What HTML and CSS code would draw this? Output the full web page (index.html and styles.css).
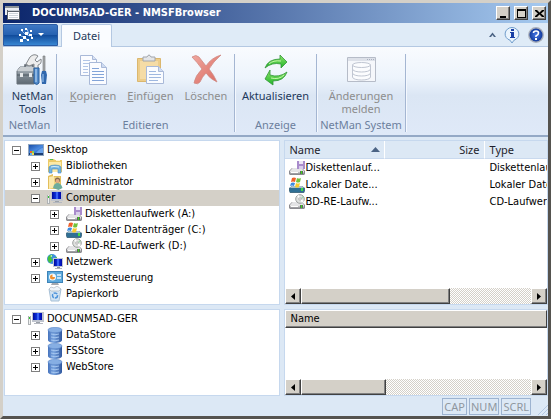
FILE: index.html
```html
<!DOCTYPE html>
<html lang="de">
<head>
<meta charset="utf-8">
<meta name="viewport" content="width=device-width, initial-scale=1">
<title>DOCUNM5AD-GER - NMSFBrowser</title>
<link rel="stylesheet" href="styles.css">
</head>
<body>
<svg class="defs" aria-hidden="true">
  <defs>
    <linearGradient id="g-disk" x1="0" y1="0" x2="0" y2="1"><stop offset="0" stop-color="#f4f4f4"/><stop offset="1" stop-color="#8d8d92"/></linearGradient>
    <linearGradient id="g-db" x1="0" y1="0" x2="1" y2="0"><stop offset="0" stop-color="#4673bd"/><stop offset=".4" stop-color="#7ba6e0"/><stop offset="1" stop-color="#2e569e"/></linearGradient>
    <linearGradient id="g-screen" x1="0" y1="0" x2="1" y2="0"><stop offset="0" stop-color="#000a9c"/><stop offset=".5" stop-color="#1038e8"/><stop offset="1" stop-color="#0008a8"/></linearGradient>
    <linearGradient id="g-desk" x1="0" y1="0" x2="1" y2="1"><stop offset="0" stop-color="#1b4fa8"/><stop offset=".55" stop-color="#4a8ae0"/><stop offset="1" stop-color="#1c55b4"/></linearGradient>
    <linearGradient id="g-green" x1="0" y1="0" x2="0" y2="1"><stop offset="0" stop-color="#8fe66a"/><stop offset="1" stop-color="#1fb32a"/></linearGradient>
    <linearGradient id="g-box" x1="0" y1="0" x2="0" y2="1"><stop offset="0" stop-color="#b9c0c6"/><stop offset=".5" stop-color="#7f8a93"/><stop offset="1" stop-color="#5e6972"/></linearGradient>
    <linearGradient id="g-red" x1="0" y1="0" x2="1" y2="1"><stop offset="0" stop-color="#f0a8a0"/><stop offset="1" stop-color="#d9695f"/></linearGradient>
    <radialGradient id="g-help"><stop offset="0" stop-color="#4a7be8"/><stop offset="1" stop-color="#123a9c"/></radialGradient>
  </defs>
  <symbol id="i-drive" viewBox="0 0 16 16">
    <path d="M3 8h10l3 3v3l-1 1H1l-1-1v-3z" fill="#8b8b90"/>
    <path d="M3.500 8h9l2.500 3H1z" fill="#e4e4e6"/><path d="M1 11h14v3H1z" fill="url(#g-disk)"/>
    <path d="M2 12.500h7" stroke="#fff"/><path d="M11 11h3v3h-3z" fill="#5d6a5c"/><path d="M12 11h1v3h-1z" fill="#3ed31c"/>
  </symbol>
  <symbol id="i-floppy" viewBox="0 0 16 16">
    <use href="#i-drive"/><path d="M8 1h8v8H8z" fill="#a98ccc"/><path d="M10 1h4v3h-4z" fill="#ece6f6"/><path d="M10 6h4v3h-4z" fill="#d8cdea"/>
  </symbol>
  <symbol id="i-hdd" viewBox="0 0 16 16">
    <path d="M3 9h10l3 2v3l-1 2H1l-1-2v-3z" fill="#466f86"/><path d="M3 9h10l2 2H1z" fill="#a8bfcb"/><path d="M1 11h14v4H1z" fill="#2f6f94"/><path d="M12 11h2v3h-2z" fill="#42dc40"/>
    <path d="M3 1q2-1 4 0L6 5Q4 4 2 5z" fill="#f0612a"/><path d="M8 1q2 1 4 0l-1 4q-2 1-4 0z" fill="#72c23a"/><path d="M2 6q2-1 4 0L5 9Q3 8 1 9z" fill="#3e8be0"/><path d="M7 6q2 1 4 0l-1 4q-2 1-4 0z" fill="#f8ca2e"/>
  </symbol>
  <symbol id="i-cd" viewBox="0 0 16 16">
    <use href="#i-drive"/><circle cx="11" cy="5" r="4.300" fill="#dfe1df" stroke="#9da09f"/><path d="M11 5l-3-3 2-1zM11 5l4 2-2 2z" fill="#fff"/><path d="M11 5l3-3 1 2z" fill="#a6d4b0"/><circle cx="11" cy="5" r="1.200" fill="#fff" stroke="#888" stroke-width=".6"/>
  </symbol>
  <symbol id="i-desktop" viewBox="0 0 16 16">
    <path d="M0 2h16v12H0z" fill="#8fa5bf"/><path d="M1 3h14v8H1z" fill="url(#g-desk)"/><path d="M1 11h14v2H1z" fill="#1c3d74"/><path d="M8 11q4-5 7-5v5z" fill="#6ba2ea"/>
    <path d="M2 9h2v2H2z" fill="#f0652c"/><path d="M4 9h2v2H4z" fill="#8ad04a"/><path d="M2 11h2v2H2z" fill="#5cb4f4"/><path d="M4 11h2v2H4z" fill="#f4d850"/>
  </symbol>
  <symbol id="i-library" viewBox="0 0 16 16">
    <path d="M1 1h6l1 1h7v12H1z" fill="#eccb68"/><path d="M2 4h12v10H2z" fill="#fbeaa8"/><path d="M3 1h3v1H3z" fill="#55b94a"/><path d="M9 2h4v1H9z" fill="#fff5cf"/>
    <path d="M2 15V9q1-2 6-2t6 2v6h-3v-4H5v4z" fill="#72b4e0" stroke="#468cc0" stroke-width=".6"/><path d="M4 9q2-1 8 0" stroke="#d6effc" fill="none"/>
  </symbol>
  <symbol id="i-user" viewBox="0 0 16 16">
    <path d="M1 2l5-2v2h8v13H1z" fill="#e3bf5c"/><path d="M2 3l5-1v12l-5 1z" fill="#fbe9ac"/><path d="M7 3h6v10H7z" fill="#f2d681"/>
    <circle cx="10.500" cy="6" r="2.600" fill="#85694e"/><circle cx="10.500" cy="7" r="2" fill="#e0ac84"/><path d="M6 14q1-5 4.500-5t5 5l-4 2z" fill="#6cac9c"/>
  </symbol>
  <symbol id="i-computer" viewBox="0 0 16 16">
    <path d="M4 1h12v10H4z" fill="#bfc4ce"/><path d="M5 2h9v7H5z" fill="url(#g-screen)"/><path d="M9 2h2v7H9z" fill="#3a62f4"/><path d="M8 11h4v1H8z" fill="#9aa0a8"/><path d="M6 12h9v1H6z" fill="#b4b8c0"/>
    <path d="M0 5h3v9H0z" fill="#aeb2b4"/><path d="M1 5h1v8H1z" fill="#f1f2f2"/><path d="M1 6h1v2H1z" fill="#31c531"/>
  </symbol>
  <symbol id="i-network" viewBox="0 0 16 16">
    <circle cx="5" cy="5" r="5" fill="#3e8fe0"/><path d="M1 3q2-3 5-2L4 4l2 2-3 3Q0 7 1 3zM7 4l3-1v4L7 8z" fill="#45c23c"/><path d="M3 2l2-1v2z" fill="#d6f7ce"/>
    <path d="M6 4h10v9H6z" fill="#c1c7d2"/><path d="M7 5h8v7H7z" fill="url(#g-screen)"/><path d="M10 5h2v7h-2z" fill="#3a62f4"/><path d="M10 13h3v1h-3z" fill="#8e949b"/><path d="M8 14h7v1H8z" fill="#adb2b9"/>
  </symbol>
  <symbol id="i-control" viewBox="0 0 16 16">
    <path d="M0 1h16v12H0z" fill="#3d83b8"/><path d="M1 2h14v10H1z" fill="#5eaadc"/><circle cx="5.500" cy="7" r="3.500" fill="#f4fafe"/><path d="M5.500 4.500V7H8a2.500 2.500 0 1 1-2.500-2.500z" fill="#f09030"/>
    <path d="M10 5h4M10 8h4" stroke="#e9f6ff" stroke-width="1.500"/><path d="M5 13h6l1 2H4z" fill="#a4a9af"/>
  </symbol>
  <symbol id="i-trash" viewBox="0 0 16 16">
    <path d="M2 3h12l-2 12H4z" fill="#d2e4f3" stroke="#a7c0d6"/><path d="M2 3l2-2 3 1 3-2 4 3-2 2H4z" fill="#eef5fa" stroke="#a2adb7" stroke-width=".6"/><circle cx="8" cy="9.500" r="2.500" fill="none" stroke="#4c93da" stroke-width="1.500" stroke-dasharray="4 1"/>
  </symbol>
  <symbol id="i-db" viewBox="0 0 16 16">
    <path d="M1 3v10c0 4 14 4 14 0V3z" fill="url(#g-db)"/><ellipse cx="8" cy="3" rx="7" ry="2.700" fill="#86aee3" stroke="#5a86c8" stroke-width=".6"/>
    <path d="M4 7q4 1.500 8 0M4 10q4 1.500 8 0M4 13q4 1.500 8 0" fill="none" stroke="#a5c6f0"/>
  </symbol>
</svg>

<div class="window">
  <header class="titlebar">
    <svg class="title-icon" viewBox="0 0 16 16" aria-hidden="true"><path d="M0 1h14v9H0z" fill="#e9edf2"/><path d="M0 1h14v2H0z" fill="#8a9298"/><path d="M2 5h13v10H2z" fill="#596168"/><path d="M3 7h11v7H3z" fill="#fff"/><path d="M3 5h11v1H3z" fill="#c9cfd3"/><path d="M4 8.500h9M4 10.500h9M4 12.500h9" stroke="#cdd5d8"/></svg>
    <h1 class="title">DOCUNM5AD-GER - NMSFBrowser</h1>
    <div class="captions">
      <button class="caption" aria-label="Minimieren"><svg viewBox="0 0 11 9"><path d="M2 7h6v2H2z"/></svg></button>
      <button class="caption" aria-label="Maximieren"><svg viewBox="0 0 11 9"><path d="M1 0h9v9H1zM2 2v6h7V2z" fill-rule="evenodd"/></svg></button>
      <button class="caption" aria-label="Schließen"><svg viewBox="0 0 11 9"><path d="M1 1h2l2.500 2.500L8 1h2v1L7 4.500 10 7v1H8L5.500 5.500 3 8H1V7l3-2.500L1 2z"/></svg></button>
    </div>
  </header>

  <nav class="tabs">
    <button class="app-button" aria-label="Anwendungsmenü">
      <svg class="app-logo" viewBox="0 0 26 14" aria-hidden="true"><path d="M4 3l3 3 5 2M9 1l2 5 3 3M3 8l4 1 2 3" stroke="#9cc2f4" fill="none"/><g fill="#fff"><path d="M3 1h2v2H3zM7 0h2v2H7zM7 4h3v3H7zM12 2h2v2h-2zM1 6h2v2H1zM5 8h3v3H5zM11 6h3v2h-3zM2 11h3v3H2zM9 11h2v2H9zM13 9h2v2h-2z"/><path d="M20 5h6l-3 3z"/></g></svg>
    </button>
    <a class="tab" href="#datei">Datei</a>
    <div class="tab-tools">
      <button class="tool" aria-label="Menüband minimieren"><svg class="caret" viewBox="0 0 7 5"><path d="M0 5l3.500-4.500L7 5H5L3.500 3 2 5z" fill="#4b6384"/></svg></button>
      <button class="tool" aria-label="Info"><svg class="round" viewBox="0 0 16 16"><path d="M8 .500a7 6.500 0 0 1 2 12.700L8 16l-2-2.800A7 6.500 0 0 1 8 .500z" fill="#eaf4fd" stroke="#6f9ccb"/><path d="M7 2h3v2H7zM6 5h4v5h1v1H6v-1h1V6H6z" fill="#173fa6"/></svg></button>
      <button class="tool" aria-label="Hilfe"><svg class="round" viewBox="0 0 16 16"><circle cx="8" cy="8" r="7.900" fill="#a7adb9"/><circle cx="8" cy="8" r="6.500" fill="url(#g-help)"/><path d="M5.500 6Q5.500 4 8 4t2.500 2T8 9v1" fill="none" stroke="#fff" stroke-width="1.600"/><path d="M7 11h2v2H7z" fill="#fff"/></svg></button>
    </div>
  </nav>

  <section class="ribbon" id="datei">
    <div class="group group-netman">
      <div class="commands">
        <button class="command">
          <svg viewBox="0 0 32 32" aria-hidden="true"><path d="M9 14v-3h8v3" fill="none" stroke="#59616a" stroke-width="1.500"/><path d="M1 17l3-4h18v14l-4 3H1z" fill="url(#g-box)" stroke="#68727b"/><path d="M1 17l3-4h18l-3 4z" fill="#c9ced2"/><path d="M1 21h18" stroke="#4c565e"/><path d="M4 19h3v4H4zM13 19h3v4h-3z" fill="#e5e8ea"/><path d="M14 3q4-4 8-1l-3 4 2 2 4-3q1 5-3 6v6h-4v-7l-5 2-3-2z" fill="#ededed" stroke="#85898d"/><path d="M18 14h5v15q-2 3-5 0z" fill="#528bcb" stroke="#2b5f9b"/><path d="M20 15v13" stroke="#c5e0f8"/><path d="M27 2h2v15h-2z" fill="#a9abad" stroke="#6f7377" stroke-width=".600"/><path d="M26 17h4l1 4-1 9h-4l-1-9z" fill="#3168ad"/><path d="M27 20v8" stroke="#a7cdf4"/></svg>
          <span>NetMan<br>Tools</span>
        </button>
      </div>
      <h2>NetMan</h2>
    </div>
    <div class="group group-edit">
      <div class="commands">
        <button class="command" disabled>
          <svg viewBox="0 0 32 32" aria-hidden="true"><g fill="#fbfcff" stroke="#a9b9d8"><path d="M3.500 1.500h12l4 4v16h-16z"/><path d="M15.500 1.500v4h4" fill="#d9e2f3"/><path d="M12.500 8.500h12l5 5v17h-17z"/><path d="M24.500 8.500v5h5" fill="#cedbf1"/></g><path d="M6 6.500h7M6 9.500h6M6 12.500h5M6 15.500h5M6 18.500h5" stroke="#b2c5e6"/><path d="M15 14.500h7M15 17.500h12M15 20.500h12M15 23.500h12M15 26.500h12" stroke="#83a4d8"/></svg>
          <span><u>K</u>opieren</span>
        </button>
        <button class="command" disabled>
          <svg viewBox="0 0 32 32" aria-hidden="true"><path d="M3.500 4.500h23v23h-23z" fill="#edcd8a" stroke="#dbb76e"/><path d="M6 7h18v18H6z" fill="#f5dca6"/><path d="M9 6V3h4q2-4 4 0h4v4H9z" fill="#e3e5e8" stroke="#a1a5ac"/><path d="M12.500 12.500h12l5 5v12h-17z" fill="#fafcff" stroke="#a9b9d8"/><path d="M24.500 12.500v5h5" fill="#d0dcf1" stroke="#a9b9d8"/><path d="M15 17.500h7M15 20.500h12M15 23.500h12M15 26.500h9" stroke="#9fb8e0"/></svg>
          <span><u>E</u>infügen</span>
        </button>
        <button class="command" disabled>
          <svg viewBox="0 0 32 32" aria-hidden="true"><path d="M2 3q4-3 7 0l7 9q5-8 15-11-8 7-12 14 5 6 8 13-7-3-11-9-4 4-6 9-2 3-6 1 1-7 8-14Q7 8 2 3z" fill="url(#g-red)" stroke="#cf8a84" stroke-width=".800"/></svg>
          <span>Löschen</span>
        </button>
      </div>
      <h2>Editieren</h2>
    </div>
    <div class="group group-view">
      <div class="commands">
        <button class="command">
          <svg viewBox="0 0 32 32" aria-hidden="true"><g fill="url(#g-green)" stroke="#329639" stroke-width=".800"><path d="M5 14Q8 5 20 5V1l7 7-6 6v-4q-9-2-16 4z"/><path d="M27 18q-3 9-14 9v4l-8-6 5-9v5q9 3 17-3z"/></g><path d="M9 10q4-4 12-3M11 24q8 2 13-3" stroke="#c4f6a9" fill="none"/></svg>
          <span>Aktualisieren</span>
        </button>
      </div>
      <h2>Anzeige</h2>
    </div>
    <div class="group group-system">
      <div class="commands">
        <button class="command" disabled>
          <svg viewBox="0 0 32 32" aria-hidden="true"><path d="M2.500 3.500h28v24h-28z" fill="#f5f7fb" stroke="#b6bcc8"/><path d="M3 4h27v3H3z" fill="#dde1e9"/><path d="M22 5.500h7" stroke="#a9b0bf" stroke-dasharray="1 1"/><g fill="#fbfcfe" stroke="#c0c6d2"><path d="M7.500 11v12c0 4 18 4 18 0V11z"/><ellipse cx="16.500" cy="11" rx="9" ry="2.500"/><path d="M7.500 15c0 4 18 4 18 0M7.500 19c0 4 18 4 18 0" fill="none"/></g></svg>
          <span>Änderungen<br>melden</span>
        </button>
      </div>
      <h2>NetMan System</h2>
    </div>
  </section>

  <main class="panes">
    <section class="pane" aria-label="Ordner">
      <ul class="tree">
        <li><div class="node"><button class="toggle open" aria-label="Zuklappen"></button><svg><use href="#i-desktop"/></svg>Desktop</div>
          <ul>
            <li><div class="node"><button class="toggle" aria-label="Aufklappen"></button><svg><use href="#i-library"/></svg>Bibliotheken</div></li>
            <li><div class="node"><button class="toggle" aria-label="Aufklappen"></button><svg><use href="#i-user"/></svg>Administrator</div></li>
            <li><div class="node selected"><button class="toggle open" aria-label="Zuklappen"></button><svg><use href="#i-computer"/></svg>Computer</div>
              <ul>
                <li><div class="node"><button class="toggle" aria-label="Aufklappen"></button><svg><use href="#i-floppy"/></svg>Diskettenlaufwerk (A:)</div></li>
                <li><div class="node"><button class="toggle" aria-label="Aufklappen"></button><svg><use href="#i-hdd"/></svg>Lokaler Datenträger (C:)</div></li>
                <li><div class="node"><button class="toggle" aria-label="Aufklappen"></button><svg><use href="#i-cd"/></svg>BD-RE-Laufwerk (D:)</div></li>
              </ul>
            </li>
            <li><div class="node"><button class="toggle" aria-label="Aufklappen"></button><svg><use href="#i-network"/></svg>Netzwerk</div></li>
            <li><div class="node"><button class="toggle" aria-label="Aufklappen"></button><svg><use href="#i-control"/></svg>Systemsteuerung</div></li>
            <li><div class="node"><span class="leaf"></span><svg><use href="#i-trash"/></svg>Papierkorb</div></li>
          </ul>
        </li>
      </ul>
    </section>

    <section class="pane" aria-label="Inhalt">
      <div class="list">
        <table class="files">
          <colgroup><col class="col-name"><col class="col-size"><col class="col-type"></colgroup>
          <thead><tr><th><span class="sorted">Name<svg class="sort" viewBox="0 0 9 5"><path d="M0 5l4.500-5L9 5z" fill="#4b6384"/></svg></span></th><th class="num">Size</th><th>Type</th></tr></thead>
          <tbody>
            <tr><td><span class="file"><svg><use href="#i-floppy"/></svg><span>Diskettenlauf...</span></span></td><td></td><td>Diskettenlaufwerk</td></tr>
            <tr><td><span class="file"><svg><use href="#i-hdd"/></svg><span>Lokaler Date...</span></span></td><td></td><td>Lokaler Datenträger</td></tr>
            <tr><td><span class="file"><svg><use href="#i-cd"/></svg><span>BD-RE-Laufw...</span></span></td><td></td><td>CD-Laufwerk</td></tr>
          </tbody>
        </table>
      </div>
      <div class="scrollbar">
        <button class="arrow" aria-label="Nach links"><svg viewBox="0 0 4 7"><path d="M4 0v7L0 3.500z"/></svg></button>
        <div class="track"><div class="thumb thumb-wide"></div></div>
        <button class="arrow" aria-label="Nach rechts"><svg viewBox="0 0 4 7"><path d="M0 0v7l4-3.500z"/></svg></button>
      </div>
    </section>

    <section class="pane" aria-label="Speicher">
      <ul class="tree">
        <li><div class="node"><button class="toggle open" aria-label="Zuklappen"></button><svg><use href="#i-computer"/></svg>DOCUNM5AD-GER</div>
          <ul>
            <li><div class="node"><button class="toggle" aria-label="Aufklappen"></button><svg><use href="#i-db"/></svg>DataStore</div></li>
            <li><div class="node"><button class="toggle" aria-label="Aufklappen"></button><svg><use href="#i-db"/></svg>FSStore</div></li>
            <li><div class="node"><button class="toggle" aria-label="Aufklappen"></button><svg><use href="#i-db"/></svg>WebStore</div></li>
          </ul>
        </li>
      </ul>
    </section>

    <section class="pane" aria-label="Speicherinhalt">
      <div class="list">
        <table class="files classic"><thead><tr><th>Name</th></tr></thead></table>
      </div>
      <div class="scrollbar">
        <button class="arrow" aria-label="Nach links"><svg viewBox="0 0 4 7"><path d="M4 0v7L0 3.500z"/></svg></button>
        <div class="track"><div class="thumb thumb-narrow"></div></div>
        <button class="arrow" aria-label="Nach rechts"><svg viewBox="0 0 4 7"><path d="M0 0v7l4-3.500z"/></svg></button>
      </div>
    </section>
  </main>

  <footer class="status">
    <span>CAP</span><span>NUM</span><span>SCRL</span>
    <svg class="grip" viewBox="0 0 10 10" aria-hidden="true"><path d="M0 10L10 0M4 10l6-6M8 10l2-2" stroke="#b2c6e2"/></svg>
  </footer>
</div>
</body>
</html>
```
FILE: styles.css
```css
* { box-sizing: border-box; }

body {
  margin: 0;
  color: #000;
  font: 11px/16px "DejaVu Sans Condensed", "DejaVu Sans", sans-serif;
}

button {
  margin: 0;
  padding: 0;
  border: 0;
  background: none;
  font: inherit;
  color: inherit;
}

h1, h2, ul { margin: 0; padding: 0; font: inherit; list-style: none; }

.defs { position: absolute; width: 0; height: 0; }

.window {
  display: flex;
  flex-direction: column;
  min-height: 100vh;
  border: solid #d4d0c8;
  border-width: 3px;
  border-right-color: #55534f;
  border-bottom-color: #55534f;
  background: #dce8f5;
}

/* Title bar */
.titlebar {
  display: flex;
  align-items: center;
  height: 20px;
  padding: 0 2px;
  background: linear-gradient(90deg, #0a246a, #a6caf0);
  color: #fff;
}
.title-icon { width: 16px; height: 16px; }
.title {
  flex: 1;
  margin-left: 11px;
  font-weight: bold;
}
.captions { display: flex; gap: 4px; }
.caption {
  display: grid;
  place-items: center;
  width: 14px;
  height: 14px;
}
.caption, .arrow, .thumb {
  border: 1px solid;
  border-color: #fff #404040 #404040 #fff;
  background: #d4d0c8;
  box-shadow: inset -1px -1px #808080;
}
.caption svg { width: 11px; height: 9px; }

/* Tab row */
.tabs {
  display: flex;
  align-items: flex-end;
  height: 24px;
  border-bottom: 1px solid #b4c8e2;
  background: #dfebf7;
}
.app-button {
  display: grid;
  place-items: center;
  width: 55px;
  height: 22px;
  border: 1px solid #2a5ba4;
  border-radius: 0 2px 0 0;
  background: linear-gradient(#3f78c4, #2460b0 50%, #114c9c 52%, #3886d2);
}
.app-logo { width: 26px; height: 14px; }
.tab {
  width: 51px;
  height: 23px;
  margin: 0 0 -1px 3px;
  border: 1px solid #b4c8e2;
  border-bottom: 0;
  border-radius: 2px 2px 0 0;
  background: #fafcff;
  color: #1e395b;
  font: 11px/22px "Noto Sans", sans-serif;
  text-align: center;
  text-decoration: none;
}
.tab-tools {
  display: flex;
  align-items: center;
  gap: 8px;
  height: 23px;
  margin-left: auto;
  padding-right: 4px;
}
.tool { display: grid; place-items: center; }
.caret { width: 7px; height: 5px; }
.round { width: 16px; height: 16px; }

/* Ribbon */
.ribbon {
  display: flex;
  height: 90px;
  padding-top: 7px;
  border-bottom: 2px solid #94a9c6;
  background: linear-gradient(#f9fbfe, #edf4fc 35%, #dbe6f4 55%, #dfe9f8);
  color: #1e395b;
  font: 11px/13px "Noto Sans", sans-serif;
}
.group {
  display: flex;
  flex-direction: column;
  justify-content: space-between;
  height: 78px;
  border-right: 1px solid #a4b6d2;
  box-shadow: 1px 0 #f4f8fe;
}
.group h2 {
  color: #6c7f9d;
  line-height: 14px;
  text-align: center;
  white-space: nowrap;
}
.group-netman { width: 54px; }
.group-netman .commands { padding-left: 6px; }
.group-edit { width: 178px; }
.group-view { width: 82px; }
.group-system { width: 89px; }
.commands { display: flex; justify-content: center; }
.command {
  display: flex;
  flex-direction: column;
  align-items: center;
  gap: 3px;
}
.command svg { width: 32px; height: 32px; }
.command:disabled { color: #8d8d8d; }
.group-edit .commands { gap: 11px; padding-left: 6px; }

/* Work area */
.panes {
  display: grid;
  flex: 1;
  grid-template: minmax(165px, 165fr) minmax(87px, 87fr) / minmax(0, 275fr) minmax(0, 264fr);
  gap: 4px;
  padding: 3px 0 0 1px;
}
.pane {
  display: flex;
  flex-direction: column;
  min-width: 0;
  border: 1px solid #c6d8ee;
  background: #fff;
}

.tree { padding-top: 1px; white-space: nowrap; }
.node {
  display: flex;
  align-items: center;
  height: 16px;
  padding-left: 7px;
}
.tree ul .node { padding-left: 26px; }
.tree ul ul .node { padding-left: 45px; }
.node svg { flex: none; width: 16px; height: 16px; margin: 0 3px 0 7px; }
.selected { background: #d4d0c8; }
.toggle, .leaf { flex: none; width: 9px; height: 9px; }
.toggle {
  border: 1px solid #808080;
  background:
    linear-gradient(#000, #000) center / 5px 1px no-repeat,
    linear-gradient(#000, #000) center / 1px 5px no-repeat,
    #fff;
}
.toggle.open { background: linear-gradient(#000, #000) center / 5px 1px no-repeat, #fff; }

.list { flex: 1; min-height: 0; overflow: hidden; }
.files {
  width: 340px;
  table-layout: fixed;
  border-collapse: separate;
  border-spacing: 0;
}
.col-name, .col-size { width: 100px; }
.files th {
  height: 18px;
  padding: 0 4px 0 5px;
  border-right: 1px solid #fff;
  border-bottom: 1px solid #c9d9ee;
  background: #dce8f5;
  color: #1e1e2c;
  font: 11px/17px "Noto Sans", sans-serif;
  text-align: left;
}
.files th.num { text-align: right; }
.sorted { display: flex; align-items: center; justify-content: space-between; }
.sort { width: 9px; height: 5px; }
.files td { height: 17px; padding: 0 0 0 5px; overflow: hidden; white-space: nowrap; }
.files td:first-child { padding-left: 4px; }
.file { display: flex; align-items: center; gap: 1px; }
.file svg { flex: none; width: 16px; height: 16px; }
.files.classic { width: 100%; }
.classic th {
  height: 17px;
  border: 1px solid;
  border-color: #fff #404040 #404040 #fff;
  background: #d4d0c8;
  box-shadow: inset 0 -1px #808080;
  color: #000;
  font: inherit;
}

.scrollbar { display: flex; height: 16px; }
.arrow { display: grid; place-items: center; width: 16px; height: 16px; }
.arrow svg { width: 4px; height: 7px; }
.track {
  flex: 1;
  background: repeating-conic-gradient(#fff 0 25%, #d4d0c8 0 50%) 0 0 / 2px 2px;
}
.thumb { height: 16px; }
.thumb-wide { width: 65%; }
.thumb-narrow { width: 37%; }

/* Status bar */
.status {
  display: flex;
  align-items: center;
  justify-content: flex-end;
  gap: 2px;
  height: 20px;
  color: #8f979f;
}
.status span {
  height: 17px;
  padding: 0 1px;
  border: 1px solid #9db3d0;
  font: 11px/16px "Noto Sans", sans-serif;
}
.grip { width: 10px; height: 10px; margin: 8px 0 0 5px; }
```
